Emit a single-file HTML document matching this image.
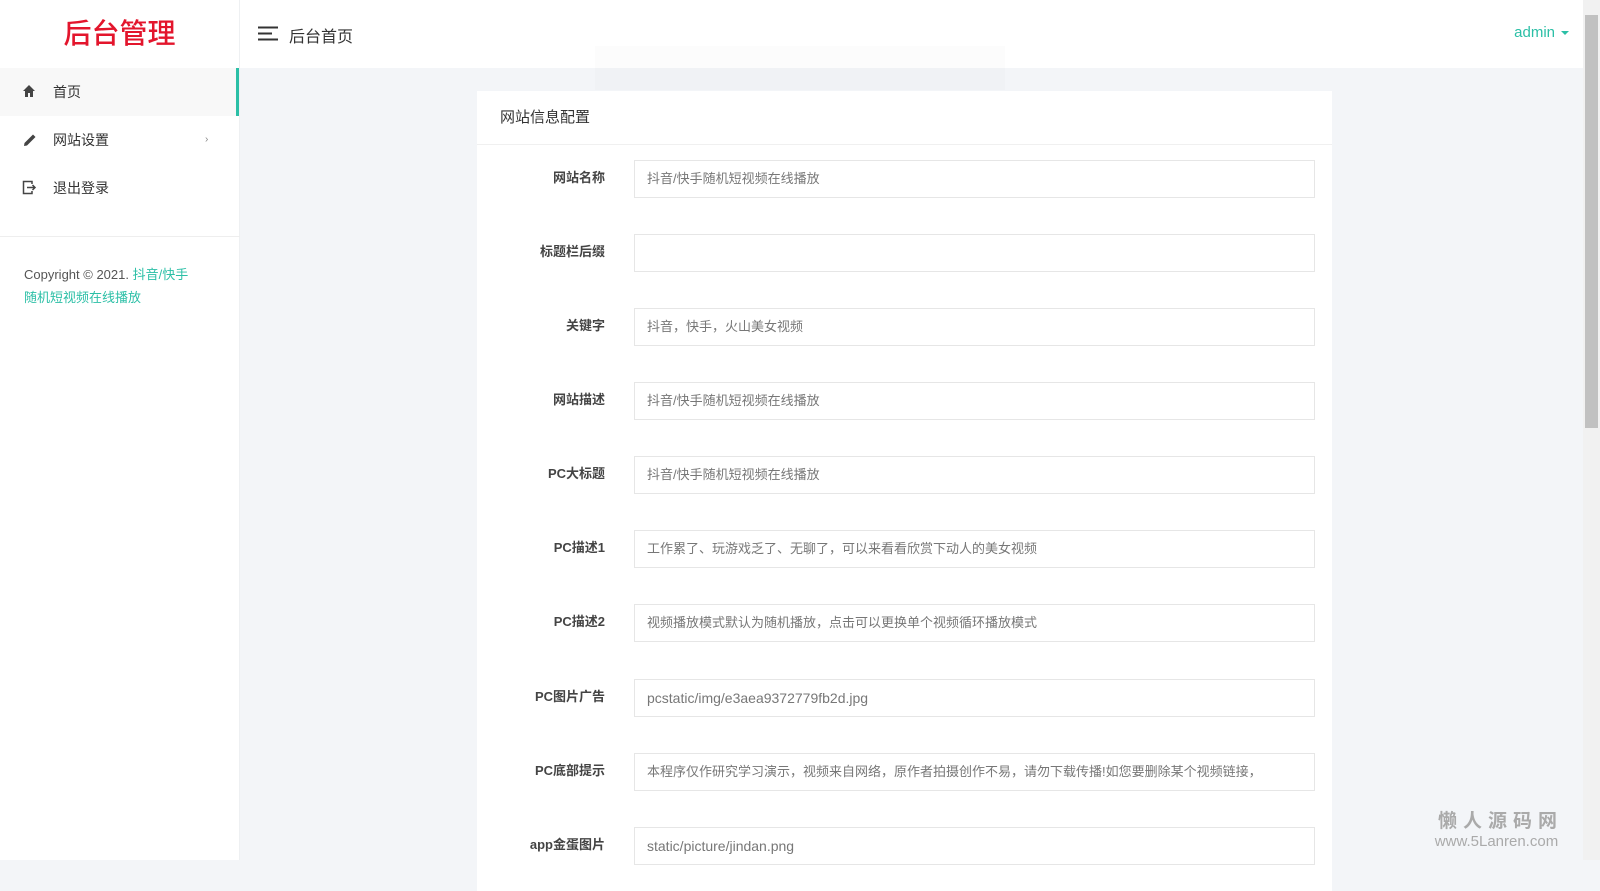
<!DOCTYPE html>
<html><head><meta charset="utf-8"><style>
*{margin:0;padding:0;box-sizing:border-box}
body{width:1600px;height:860px;overflow:hidden;background:#f3f5f8;font-family:"Liberation Sans","Noto Sans CJK SC",sans-serif;color:#333;position:relative}
.side{position:absolute;left:0;top:0;width:240px;height:860px;background:#fff;border-right:1px solid #eef0f2}
.logo{height:68px;text-align:center;line-height:68px;font-size:28px;color:#e3152c;font-weight:500}
.mi{position:relative;height:48px;line-height:48px;padding-left:53px;font-size:14px;color:#333}
.mi.act{background:#f8f8f8;border-right:3px solid #2bbfa6}
.mi svg{position:absolute;left:22px;top:16px}
.div{position:absolute;top:236px;left:0;width:240px;border-top:1px solid #eee}
.copy{position:absolute;top:263px;left:24px;font-size:13px;line-height:23px;color:#555;width:180px}
.copy span{color:#2bbfa6}
.top{position:absolute;left:240px;top:0;width:1343px;height:68px;background:#fff}
.ham{position:absolute;left:18px;top:26px}
.tt{position:absolute;left:49px;top:23px;font-size:16px;color:#333}
.adm{position:absolute;right:14px;top:24px;font-size:15px;color:#2bbfa6}
.adm:after{content:"";display:inline-block;margin-left:6px;vertical-align:middle;border:4px solid transparent;border-top-color:#2bbfa6;border-bottom:0}
.toast{position:absolute;left:595px;top:46px;width:410px;height:44px;background:rgba(0,0,0,0.012)}
.card{position:absolute;left:477px;top:91px;width:855px;height:800px;background:#fff}
.ch{height:54px;line-height:54px;padding-left:23px;font-size:15px;color:#333;border-bottom:1px solid #f0f0f0}
.row{position:absolute;left:0;width:855px;height:38px}
.row label{position:absolute;right:727px;top:7px;font-size:13px;font-weight:bold;color:#444;white-space:nowrap}
.row div{position:absolute;left:157px;width:681px;height:38px;border:1px solid #e6e6e6;padding-left:12px;line-height:36px;font-size:13px;color:#777;white-space:nowrap;overflow:hidden}
.sb{position:absolute;left:1583px;top:0;width:17px;height:860px;background:#f1f1f1}
.th{position:absolute;left:2px;top:15px;width:13px;height:413px;background:#c1c1c1}
.wm{position:absolute;left:1438px;top:806px;text-align:center;color:#aaa}
</style></head><body>
<div class="side">
<div class="logo">后台管理</div>
<div class="mi act"><svg width="14" height="14" viewBox="0 0 14 14"><path d="M7 1 L1 7 H3 V13 H6 V9 H8 V13 H11 V7 H13 Z" fill="#444"/></svg>首页</div>
<div class="mi"><svg width="16" height="16" viewBox="0 0 16 16"><path d="M2 14 L2.5 11 L11 2.5 L13.5 5 L5 13.5 Z" fill="#444"/></svg>网站设置<span style="position:absolute;left:205px;font-size:10px;color:#888">›</span></div>
<div class="mi"><svg width="15" height="15" viewBox="0 0 15 15" fill="none" stroke="#444" stroke-width="1.5"><path d="M10 4V1.5H1.5V13.5H10V11"/><path d="M5 7.5H13M10.5 5L13 7.5L10.5 10"/></svg>退出登录</div>
</div>
<div class="div"></div>
<div class="copy">Copyright © 2021. <span>抖音/快手<br>随机短视频在线播放</span></div>
<div class="top">
<svg class="ham" width="20" height="15" viewBox="0 0 20 15"><path d="M0 1.5H20M0 7.5H14M0 13.5H20" stroke="#333" stroke-width="2"/></svg>
<div class="tt">后台首页</div>
<div class="adm">admin</div>
</div>
<div class="toast"></div>
<div class="card">
<div class="ch">网站信息配置</div>
<div class="row" style="top:69px"><label>网站名称</label><div>抖音/快手随机短视频在线播放</div></div>
<div class="row" style="top:143px"><label>标题栏后缀</label><div></div></div>
<div class="row" style="top:217px"><label>关键字</label><div>抖音，快手，火山美女视频</div></div>
<div class="row" style="top:291px"><label>网站描述</label><div>抖音/快手随机短视频在线播放</div></div>
<div class="row" style="top:365px"><label>PC大标题</label><div>抖音/快手随机短视频在线播放</div></div>
<div class="row" style="top:439px"><label>PC描述1</label><div>工作累了、玩游戏乏了、无聊了，可以来看看欣赏下动人的美女视频</div></div>
<div class="row" style="top:513px"><label>PC描述2</label><div>视频播放模式默认为随机播放，点击可以更换单个视频循环播放模式</div></div>
<div class="row" style="top:588px"><label>PC图片广告</label><div style="font-size:14px">pcstatic/img/e3aea9372779fb2d.jpg</div></div>
<div class="row" style="top:662px"><label>PC底部提示</label><div>本程序仅作研究学习演示，视频来自网络，原作者拍摄创作不易，请勿下载传播!如您要删除某个视频链接，</div></div>
<div class="row" style="top:736px"><label>app金蛋图片</label><div style="font-size:14px">static/picture/jindan.png</div></div>
</div>
<div class="wm"><div style="font-size:19px;font-weight:bold;letter-spacing:6px">懒人源码网</div><div style="font-size:15px;margin-left:-8px">www.5Lanren.com</div></div>
<div class="sb"><div class="th"></div></div>
</body></html>
